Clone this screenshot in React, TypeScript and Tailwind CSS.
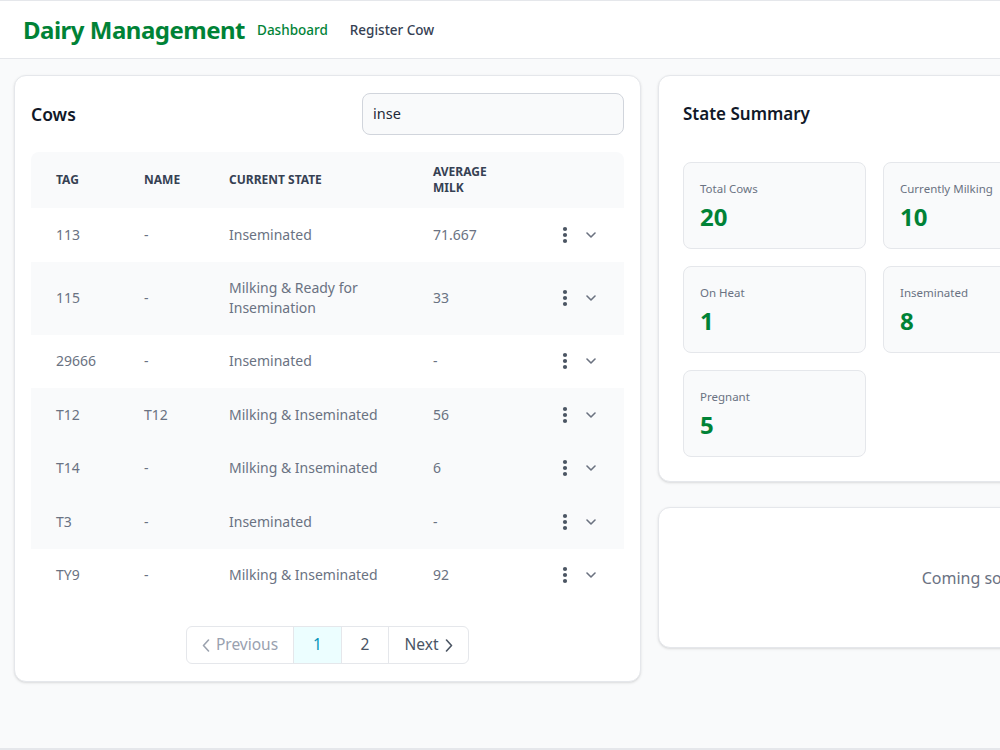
import React from "react";

const font = { fontFamily: '"Noto Sans", "Open Sans", sans-serif' };

type Row = { tag: string; name: string; state: string; milk: string; bg: boolean };

const rows: Row[] = [
  { tag: "113", name: "-", state: "Inseminated", milk: "71.667", bg: false },
  { tag: "115", name: "-", state: "Milking & Ready for Insemination", milk: "33", bg: true },
  { tag: "29666", name: "-", state: "Inseminated", milk: "-", bg: false },
  { tag: "T12", name: "T12", state: "Milking & Inseminated", milk: "56", bg: true },
  { tag: "T14", name: "-", state: "Milking & Inseminated", milk: "6", bg: true },
  { tag: "T3", name: "-", state: "Inseminated", milk: "-", bg: true },
  { tag: "TY9", name: "-", state: "Milking & Inseminated", milk: "92", bg: false },
];

function Dots() {
  return (
    <svg width="6" height="18" viewBox="0 0 6 18">
      <circle cx="3" cy="3" r="2.1" fill="#4b5563" />
      <circle cx="3" cy="9" r="2.1" fill="#4b5563" />
      <circle cx="3" cy="15" r="2.1" fill="#4b5563" />
    </svg>
  );
}

function ChevronDown() {
  return (
    <svg width="10" height="6" viewBox="0 0 10 6" fill="none">
      <path d="M1 1l4 4 4-4" stroke="#6b7280" strokeWidth="1.6" strokeLinecap="round" strokeLinejoin="round" />
    </svg>
  );
}

function StatCard({ label, value }: { label?: string; value?: string }) {
  return (
    <div className="h-[87px] rounded-lg border border-gray-200 bg-gray-50 px-4 pt-4">
      {label && <div className="text-[11.5px] leading-5 text-gray-500">{label}</div>}
      {value && <div className="mt-0.5 text-[24px] font-bold leading-8 text-green-700">{value}</div>}
    </div>
  );
}

export default function App() {
  return (
    <div
      className="h-[750px] w-[1000px] overflow-hidden border-b-2 border-gray-200 bg-gray-50"
      style={font}
    >
      <div className="w-[1300px]">
        <header className="flex h-[59px] items-center border-b border-t border-gray-200 bg-white pl-[23px]">
          <div className="text-[24px] font-bold tracking-[-0.5px] text-green-700">Dairy Management</div>
          <nav className="ml-[12px] flex gap-[22px] pt-0.5 text-[13.5px] font-medium">
            <span className="text-green-700">Dashboard</span>
            <span className="text-gray-700">Register Cow</span>
          </nav>
        </header>

        <main className="grid grid-cols-[627px_627px] gap-[17px] px-[14px] pt-4">
          {/* Left card */}
          <section className="rounded-xl border border-gray-200 bg-white px-4 pb-[17px] pt-[17px] shadow-sm">
            <div className="flex items-center justify-between">
              <h2 className="text-[17.5px] font-semibold text-gray-900">Cows</h2>
              <div className="flex h-[42px] w-[262px] items-center rounded-lg border border-gray-300 bg-gray-50 px-[10px] text-[14.5px] text-gray-800">
                inse
              </div>
            </div>

            <table className="mt-[17px] w-full table-fixed border-collapse">
              <colgroup>
                <col className="w-[88px]" />
                <col className="w-[85px]" />
                <col className="w-[204px]" />
                <col className="w-[122px]" />
                <col />
              </colgroup>
              <thead>
                <tr className="h-[56px] bg-gray-50 text-left text-[12px] font-bold uppercase leading-4 text-gray-700">
                  <th className="rounded-tl-lg pl-[25px] font-bold">Tag</th>
                  <th className="pl-[25px] font-bold">Name</th>
                  <th className="pl-[25px] font-bold">Current State</th>
                  <th className="pl-[25px] pr-8 font-bold">Average Milk</th>
                  <th className="rounded-tr-lg"></th>
                </tr>
              </thead>
              <tbody>
                {rows.map((r) => (
                  <tr
                    key={r.tag}
                    className={`text-[14px] leading-5 text-gray-500 ${r.bg ? "bg-gray-50" : "bg-white"}`}
                  >
                    <td className="py-[16.75px] pl-[25px]">{r.tag}</td>
                    <td className="py-[16.75px] pl-[25px]">{r.name}</td>
                    <td className="py-[16.5px] pl-[25px] pr-6">{r.state}</td>
                    <td className="py-[16.75px] pl-[25px]">{r.milk}</td>
                    <td className="py-[16.75px]">
                      <div className="flex items-center pl-[32px]">
                        <Dots />
                        <span className="ml-[18px]">
                          <ChevronDown />
                        </span>
                      </div>
                    </td>
                  </tr>
                ))}
              </tbody>
            </table>

            <div className="mt-6 flex justify-center">
              <div className="flex h-[38px] overflow-hidden rounded-md border border-gray-200 text-[15.5px]">
                <div className="flex w-[106px] items-center justify-center gap-1.5 text-gray-400">
                  <svg width="8" height="13" viewBox="0 0 8 13" fill="none">
                    <path d="M6.5 1L1.5 6.5l5 5.5" stroke="#9ca3af" strokeWidth="1.6" strokeLinecap="round" strokeLinejoin="round" />
                  </svg>
                  <span>Previous</span>
                </div>
                <div className="flex w-[48px] items-center justify-center border-l border-gray-200 bg-cyan-50 text-cyan-600">1</div>
                <div className="flex w-[47px] items-center justify-center border-l border-gray-200 text-gray-600">2</div>
                <div className="flex w-[80px] items-center justify-center gap-1.5 border-l border-gray-200 text-gray-600">
                  <span>Next</span>
                  <svg width="8" height="13" viewBox="0 0 8 13" fill="none">
                    <path d="M1.5 1l5 5.5-5 5.5" stroke="#4b5563" strokeWidth="1.6" strokeLinecap="round" strokeLinejoin="round" />
                  </svg>
                </div>
              </div>
            </div>
          </section>

          {/* Right column */}
          <div className="flex flex-col gap-[25px]">
            <section className="rounded-xl border border-gray-200 bg-white px-6 pb-6 pt-6 shadow-sm">
              <h2 className="text-[17px] font-semibold leading-7 text-gray-900">State Summary</h2>
              <div className="mt-[34px] grid grid-cols-[repeat(3,183px)] gap-[17px]">
                <StatCard label="Total Cows" value="20" />
                <StatCard label="Currently Milking" value="10" />
                <StatCard />
                <StatCard label="On Heat" value="1" />
                <StatCard label="Inseminated" value="8" />
                <StatCard />
                <StatCard label="Pregnant" value="5" />
              </div>
            </section>
            <section className="flex h-[141px] items-center justify-center rounded-xl border border-gray-200 bg-white text-[16px] text-gray-500 shadow-sm">
              Coming soon
            </section>
          </div>
        </main>
      </div>
    </div>
  );
}
